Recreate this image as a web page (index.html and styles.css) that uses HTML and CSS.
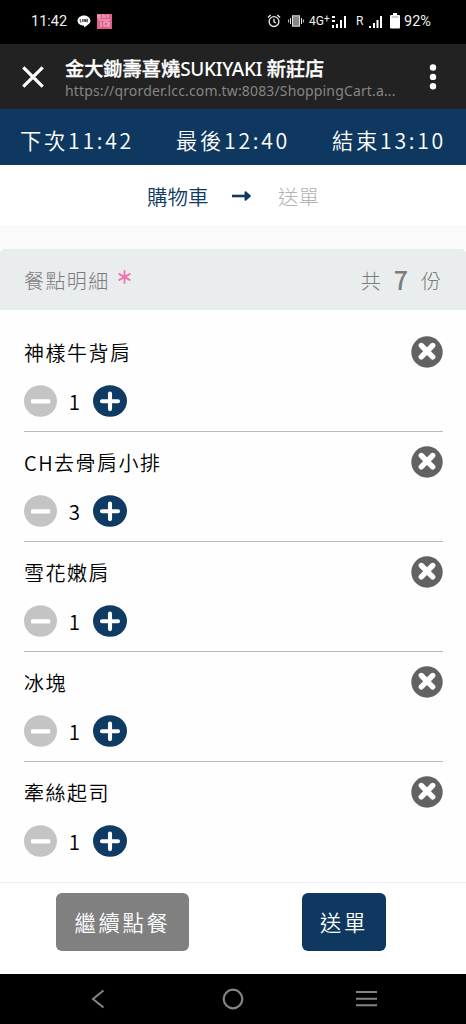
FILE: index.html
```html
<!DOCTYPE html>
<html lang="zh-Hant">
<head>
<meta charset="utf-8">
<title>購物車</title>
<link rel="stylesheet" href="styles.css">
</head>
<body>
<svg class="symbols" aria-hidden="true">
  <symbol id="minus" viewBox="0 0 34 32"><ellipse cx="16.5" cy="16" rx="16.5" ry="15.8" fill="#c4c4c4"/><rect x="7" y="14.3" width="19.2" height="4.2" rx="1.2" fill="#fff"/></symbol>
  <symbol id="plus" viewBox="0 0 34 32"><ellipse cx="17" cy="16" rx="17" ry="15.8" fill="#0f3a63"/><path d="M9 16.300h16M17 8.500v15.600" stroke="#fff" stroke-width="4.100" stroke-linecap="round"/></symbol>
  <symbol id="remove" viewBox="0 0 32 32"><circle cx="16" cy="16" r="15.7" fill="#626262"/><path d="M10.300 9.500l11.400 11.400M21.700 9.500L10.300 20.900" stroke="#fff" stroke-width="5.400" stroke-linecap="round"/></symbol>
</svg>
<div class="status">
  <span class="clock">11:42</span>
  <svg class="line-icon" width="14" height="13" viewBox="0 0 14 13"><path d="M7 .4c3.600 0 6.500 2.300 6.500 5.200 0 2.800-3.300 5-6.300 6.900l-.1-1.800C3.300 10.700.5 8.600.5 5.600.5 2.700 3.400.4 7 .4z" fill="#fff"/><path d="M3.300 4v3h1.200M5.600 4v3M7 7V4l1.500 3V4M11 4.200H9.800v2.600H11M9.800 5.500h1" fill="none" stroke="#222" stroke-width=".8"/></svg>
  <svg width="15" height="15" viewBox="0 0 15 15"><rect width="15" height="15" fill="#e0608c"/><path d="M1 1h2v3H1zM5 0h1v4M8 1v3M11 0v4M2 6h11M4 8v5M7 8h4v4H7zM12 8v5" fill="none" stroke="#f5b8cd" stroke-width="1"/></svg>
  <div class="status-right">
    <svg class="alarm" width="14" height="14" viewBox="0 0 14 14" fill="none" stroke="#eee" stroke-width="1.300"><circle cx="7" cy="7.600" r="4.900"/><path d="M7 4.700v3.100l2 1.200M.9 3.600L3.700 1M13.100 3.600L10.300 1"/></svg>
    <svg class="vibrate" width="16" height="12" viewBox="0 0 16 12"><rect x="4.500" y=".8" width="7" height="10.400" fill="#888" stroke="#ddd"/><path d="M2.500 3v6M.7 4.500v3M13.500 3v6M15.300 4.500v3" stroke="#ddd"/></svg>
    <span class="net">4G<sup>+</sup></span>
    <svg class="sig1" width="14" height="13" viewBox="0 0 14 13" fill="#fff"><path d="M0 1h3v2H0zM0 5h3v2H0zM0 10h2v3H0zM4 9h2v4H4zM8 5h2v8H8zM12 1h2v12h-2z"/></svg>
    <span class="roam">R</span>
    <svg class="sig2" width="13" height="13" viewBox="0 0 13 13" fill="#fff"><path d="M0 11h2v2H0zM4 8h2v5H4zM7.500 5h2v8h-2zM11 1h2v12h-2z"/></svg>
    <svg class="battery" width="10" height="16" viewBox="0 0 10 16"><path d="M3 0h4v2h2q1 0 1 1v11.500q0 1-1 1H1q-1 0-1-1V3q0-1 1-1h2z" fill="#fff"/><path d="M1.500 4h7" stroke="#999" stroke-width="1"/></svg>
    <span class="percent">92%</span>
  </div>
</div>
<header class="browser">
  <svg class="close" width="22" height="22" viewBox="0 0 22 22"><path d="M1.300 1.300l19.400 19.400M20.700 1.300L1.300 20.700" stroke="#fff" stroke-width="3.200"/></svg>
  <div class="page-info">
    <div class="page-title"><b>金大鋤壽喜燒</b>SUKIYAKI <b>新莊店</b></div>
    <div class="url">https://qrorder.lcc.com.tw:8083/ShoppingCart.a...</div>
  </div>
  <svg class="more" width="8" height="26" viewBox="0 0 8 26" fill="#fff"><circle cx="4" cy="3.500" r="3.200"/><circle cx="4" cy="12.900" r="3.200"/><circle cx="4" cy="22.200" r="3.200"/></svg>
</header>
<div class="times"><span>下次11:42</span><span>最後12:40</span><span>結束13:10</span></div>
<nav class="steps">
  <span class="current">購物車</span>
  <svg width="19" height="12" viewBox="0 0 19 12"><path d="M0 6h15" stroke="#0f3a5f" stroke-width="2.600"/><path d="M13.500 2.200L17.800 6l-4.300 3.800z" fill="#0f3a5f" stroke="#0f3a5f" stroke-width="2" stroke-linejoin="round"/></svg>
  <span class="next">送單</span>
</nav>
<div class="gap"></div>
<section class="summary">
  <span class="label">餐點明細</span>
  <svg class="star" width="13" height="14" viewBox="0 0 13 14"><path d="M6.500.3v13.400M.6 3.600l11.800 6.800M12.400 3.600L.6 10.400" stroke="#ef72b5" stroke-width="1.800"/></svg>
  <span class="total"><span>共</span><b>7</b><span>份</span></span>
</section>
<main class="list">
  <article class="item"><div class="row"><h2>神樣牛背肩</h2><svg class="remove"><use href="#remove"/></svg></div><div class="counter"><svg><use href="#minus"/></svg><span>1</span><svg><use href="#plus"/></svg></div></article>
  <article class="item"><div class="row"><h2>CH去骨肩小排</h2><svg class="remove"><use href="#remove"/></svg></div><div class="counter"><svg><use href="#minus"/></svg><span>3</span><svg><use href="#plus"/></svg></div></article>
  <article class="item"><div class="row"><h2>雪花嫩肩</h2><svg class="remove"><use href="#remove"/></svg></div><div class="counter"><svg><use href="#minus"/></svg><span>1</span><svg><use href="#plus"/></svg></div></article>
  <article class="item"><div class="row"><h2>冰塊</h2><svg class="remove"><use href="#remove"/></svg></div><div class="counter"><svg><use href="#minus"/></svg><span>1</span><svg><use href="#plus"/></svg></div></article>
  <article class="item"><div class="row"><h2>牽絲起司</h2><svg class="remove"><use href="#remove"/></svg></div><div class="counter"><svg><use href="#minus"/></svg><span>1</span><svg><use href="#plus"/></svg></div></article>
</main>
<footer class="actions"><button class="continue">繼續點餐</button><button class="submit">送單</button></footer>
<div class="system-nav">
  <svg width="14" height="20" viewBox="0 0 14 20"><path d="M12.500 1.500L2 10l10.500 8.500" fill="none" stroke="#858585" stroke-width="2"/></svg>
  <svg class="home" width="22" height="22" viewBox="0 0 22 22"><circle cx="11" cy="11" r="9.300" fill="none" stroke="#858585" stroke-width="2.200"/></svg>
  <svg width="21" height="18" viewBox="0 0 21 18"><path d="M0 2h21M0 8.700h21M0 15.300h21" stroke="#858585" stroke-width="2"/></svg>
</div>
</body>
</html>
```
FILE: styles.css
```css
* { box-sizing: border-box; }
body {
  margin: 0;
  width: 466px;
  height: 1024px;
  overflow: hidden;
  display: flex;
  flex-direction: column;
  background: #fefefe;
  font-family: "Noto Sans CJK TC", sans-serif;
  font-weight: 350;
}
svg { display: block; flex: none; }
.symbols { position: absolute; width: 0; height: 0; }
.status {
  height: 44px;
  flex: none;
  background: #000;
  color: #f2f2f2;
  font: 400 14px/44px Roboto, sans-serif;
  display: flex;
  align-items: center;
  padding: 0 35px 2px 31px;
}
.clock { width: 46px; font-size: 14.500px; padding-top: 1px; }
.line-icon { margin-right: 6px; }
.status-right { margin-left: auto; display: flex; align-items: center; }
.vibrate { margin-left: 7px; }
.net { margin-left: 5px; width: 23px; font-size: 12px; line-height: 16px; white-space: nowrap; }
.net sup { font-size: 10px; line-height: 0; vertical-align: 3px; }
.roam { margin-left: 10px; width: 13px; font-size: 12px; }
.battery { margin-left: 8px; }
.percent { width: 27px; margin-left: 4px; font-size: 14.500px; padding-top: 1px; }
.browser {
  height: 65px;
  flex: none;
  background: #222;
  display: flex;
  align-items: center;
  padding: 0 29px 0 22px;
}
.page-info { margin-left: 21px; flex: 1; white-space: nowrap; padding-top: 3px; }
.page-title {
  font: 500 19px/24px "Noto Sans", "Noto Sans CJK TC", sans-serif;
  letter-spacing: -.3px;
  color: #fff;
}
.page-title b { font: 500 19.200px/24px "Noto Sans CJK TC", sans-serif; letter-spacing: 0; -webkit-text-stroke: .3px #fff; }
.url { font: 14px/20px "Noto Sans", sans-serif; letter-spacing: .150px; color: #858585; }
.times {
  height: 56px;
  flex: none;
  background: #0f3860;
  color: #fff;
  display: flex;
  justify-content: space-between;
  padding: 4px 20px 0 20px;
  font-size: 21.300px;
  line-height: 54px;
  letter-spacing: 2.700px;
}
.steps {
  height: 60px;
  flex: none;
  background: #fff;
  display: flex;
  align-items: center;
  padding: 2px 0 0 147px;
  font-size: 20.500px;
}
.current { color: #0f3a5f; width: 85px; }
.next { color: #b2b2b2; margin-left: 27px; font-weight: 300; }
.gap { height: 24px; flex: none; background: #f9faf9; }
.summary {
  height: 61px;
  flex: none;
  background: #e9edee;
  border-radius: 5px 5px 0 0;
  display: flex;
  align-items: center;
  padding: 1px 25px 0 24px;
  font-size: 20px;
  color: #7c7c7c;
  font-weight: 300;
}
.label { letter-spacing: 1.400px; width: 94px; }
.star { margin-bottom: 6px; }
.total { margin-left: auto; display: flex; align-items: center; }
.total b { font: 500 25px/40px "Noto Sans CJK TC", sans-serif; margin: 0 13px; padding-bottom: 3px; }
.list { flex: none; height: 572px; padding: 12px 23px 0 24px; }
.item { height: 110px; border-bottom: 1px solid #bbb; }
.item:last-child { border-bottom: 0; }
.row { display: flex; justify-content: space-between; padding-top: 14px; height: 63px; }
.item h2 { margin: 0; font-size: 20px; line-height: 34px; font-weight: 350; letter-spacing: 1.500px; color: #000; }
.remove { width: 32px; height: 32px; }
.counter { display: flex; align-items: center; height: 32px; }
.counter svg { width: 34px; height: 32px; }
.counter span { width: 33px; margin-right: 2px; text-align: center; font-size: 20.500px; line-height: 32px; padding-bottom: 1px; color: #000; }
.actions {
  height: 92px;
  flex: none;
  border-top: 1px solid #eee;
  background: #fff;
  display: flex;
  align-items: flex-start;
  padding: 10px 80px 0 56px;
  justify-content: space-between;
}
.actions button {
  height: 58px;
  border: 0;
  border-radius: 6px;
  padding: 0;
  color: #fff;
  font: 350 21.300px/58px "Noto Sans CJK TC", sans-serif;
  letter-spacing: 2.700px;
}
.actions .continue { width: 133px; background: #808080; }
.actions .submit { width: 84px; background: #0f3860; }
.system-nav {
  height: 50px;
  flex: none;
  background: #000;
  display: flex;
  align-items: center;
  justify-content: space-between;
  padding: 0 89px 0 91px;
}
.home { margin-left: 4px; }
```
